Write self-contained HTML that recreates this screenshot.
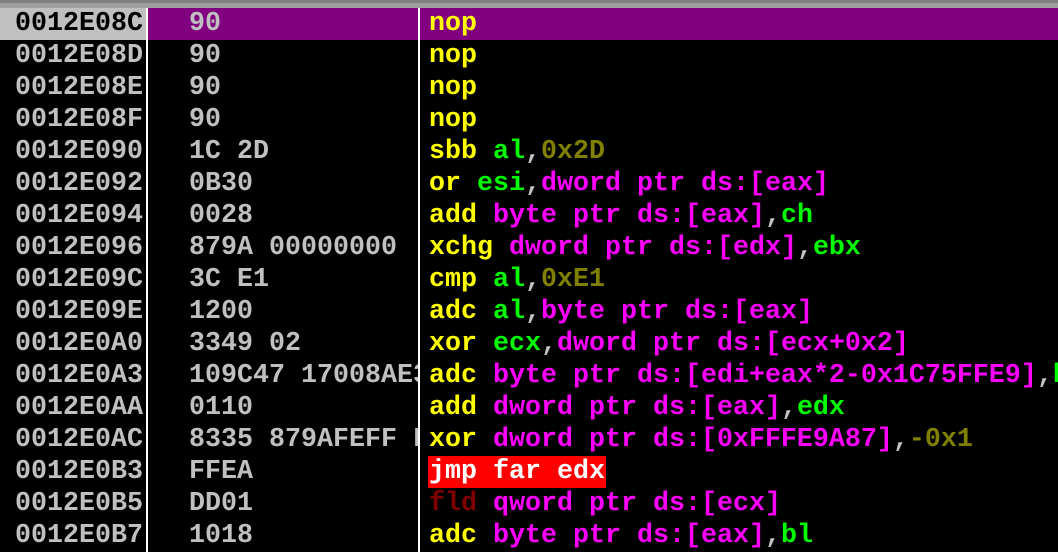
<!DOCTYPE html><html><head><style>
body{margin:0;width:1058px;height:552px;background:#000;overflow:hidden;position:relative;font-family:"Liberation Mono",monospace;font-weight:bold;font-size:26.67px}
.top{position:absolute;left:0;top:0;width:1058px;height:8px;background:#a0a0a0;border-top:3px solid #808080;box-sizing:border-box}
.col{position:absolute;top:8px;height:544px;overflow:hidden}
.r{height:32px;line-height:32px;white-space:pre;color:#c0c0c0}
.r span{display:inline-block}
.a{left:0;width:146px}.a .r{padding-left:15px}
.h{left:148px;width:270px}.h .r{padding-left:41px}
.d{left:420px;width:638px}.d .r{padding-left:9px}
.vl{position:absolute;top:8px;width:2px;height:544px;background:#fff}
.y{color:#ff0}.m{color:#f0f}.g{color:#0f0}.o{color:#808000}.s{color:#c0c0c0}.dr{color:#800000}
.sel{background:#800080}
.j{background:#f00;color:#fff;margin-left:-1px;padding:0 1px}
</style></head><body>
<div class="top"></div>
<div class="col a">
<div class="r" style="background:#c0c0c0;color:#000">0012E08C</div>
<div class="r">0012E08D</div><div class="r">0012E08E</div><div class="r">0012E08F</div><div class="r">0012E090</div><div class="r">0012E092</div><div class="r">0012E094</div><div class="r">0012E096</div><div class="r">0012E09C</div><div class="r">0012E09E</div><div class="r">0012E0A0</div><div class="r">0012E0A3</div><div class="r">0012E0AA</div><div class="r">0012E0AC</div><div class="r">0012E0B3</div><div class="r">0012E0B5</div><div class="r">0012E0B7</div>
</div>
<div class="col h">
<div class="r sel">90</div><div class="r">90</div><div class="r">90</div><div class="r">90</div><div class="r">1C 2D</div><div class="r">0B30</div><div class="r">0028</div><div class="r">879A 00000000</div><div class="r">3C E1</div><div class="r">1200</div><div class="r">3349 02</div><div class="r">109C47 17008AE3</div><div class="r">0110</div><div class="r">8335 879AFEFF FF</div><div class="r">FFEA</div><div class="r">DD01</div><div class="r">1018</div>
</div>
<div class="col d">
<div class="r sel" style="margin-left:-2px;padding-left:11px"><span class="y">nop</span></div>
<div class="r"><span class="y">nop</span></div>
<div class="r"><span class="y">nop</span></div>
<div class="r"><span class="y">nop</span></div>
<div class="r"><span class="y">sbb</span> <span class="g">al</span><span class="s">,</span><span class="o">0x2D</span></div>
<div class="r"><span class="y">or</span> <span class="g">esi</span><span class="s">,</span><span class="m">dword ptr ds:[eax]</span></div>
<div class="r"><span class="y">add</span> <span class="m">byte ptr ds:[eax]</span><span class="s">,</span><span class="g">ch</span></div>
<div class="r"><span class="y">xchg</span> <span class="m">dword ptr ds:[edx]</span><span class="s">,</span><span class="g">ebx</span></div>
<div class="r"><span class="y">cmp</span> <span class="g">al</span><span class="s">,</span><span class="o">0xE1</span></div>
<div class="r"><span class="y">adc</span> <span class="g">al</span><span class="s">,</span><span class="m">byte ptr ds:[eax]</span></div>
<div class="r"><span class="y">xor</span> <span class="g">ecx</span><span class="s">,</span><span class="m">dword ptr ds:[ecx+0x2]</span></div>
<div class="r"><span class="y">adc</span> <span class="m">byte ptr ds:[edi+eax*2-0x1C75FFE9]</span><span class="s">,</span><span class="g">bh</span></div>
<div class="r"><span class="y">add</span> <span class="m">dword ptr ds:[eax]</span><span class="s">,</span><span class="g">edx</span></div>
<div class="r"><span class="y">xor</span> <span class="m">dword ptr ds:[0xFFFE9A87]</span><span class="s">,</span><span class="o">-0x1</span></div>
<div class="r"><span class="j">jmp far edx</span></div>
<div class="r"><span class="dr">fld</span> <span class="m">qword ptr ds:[ecx]</span></div>
<div class="r"><span class="y">adc</span> <span class="m">byte ptr ds:[eax]</span><span class="s">,</span><span class="g">bl</span></div>
</div>
<div class="vl" style="left:146px"></div>
<div class="vl" style="left:418px"></div>
</body></html>
